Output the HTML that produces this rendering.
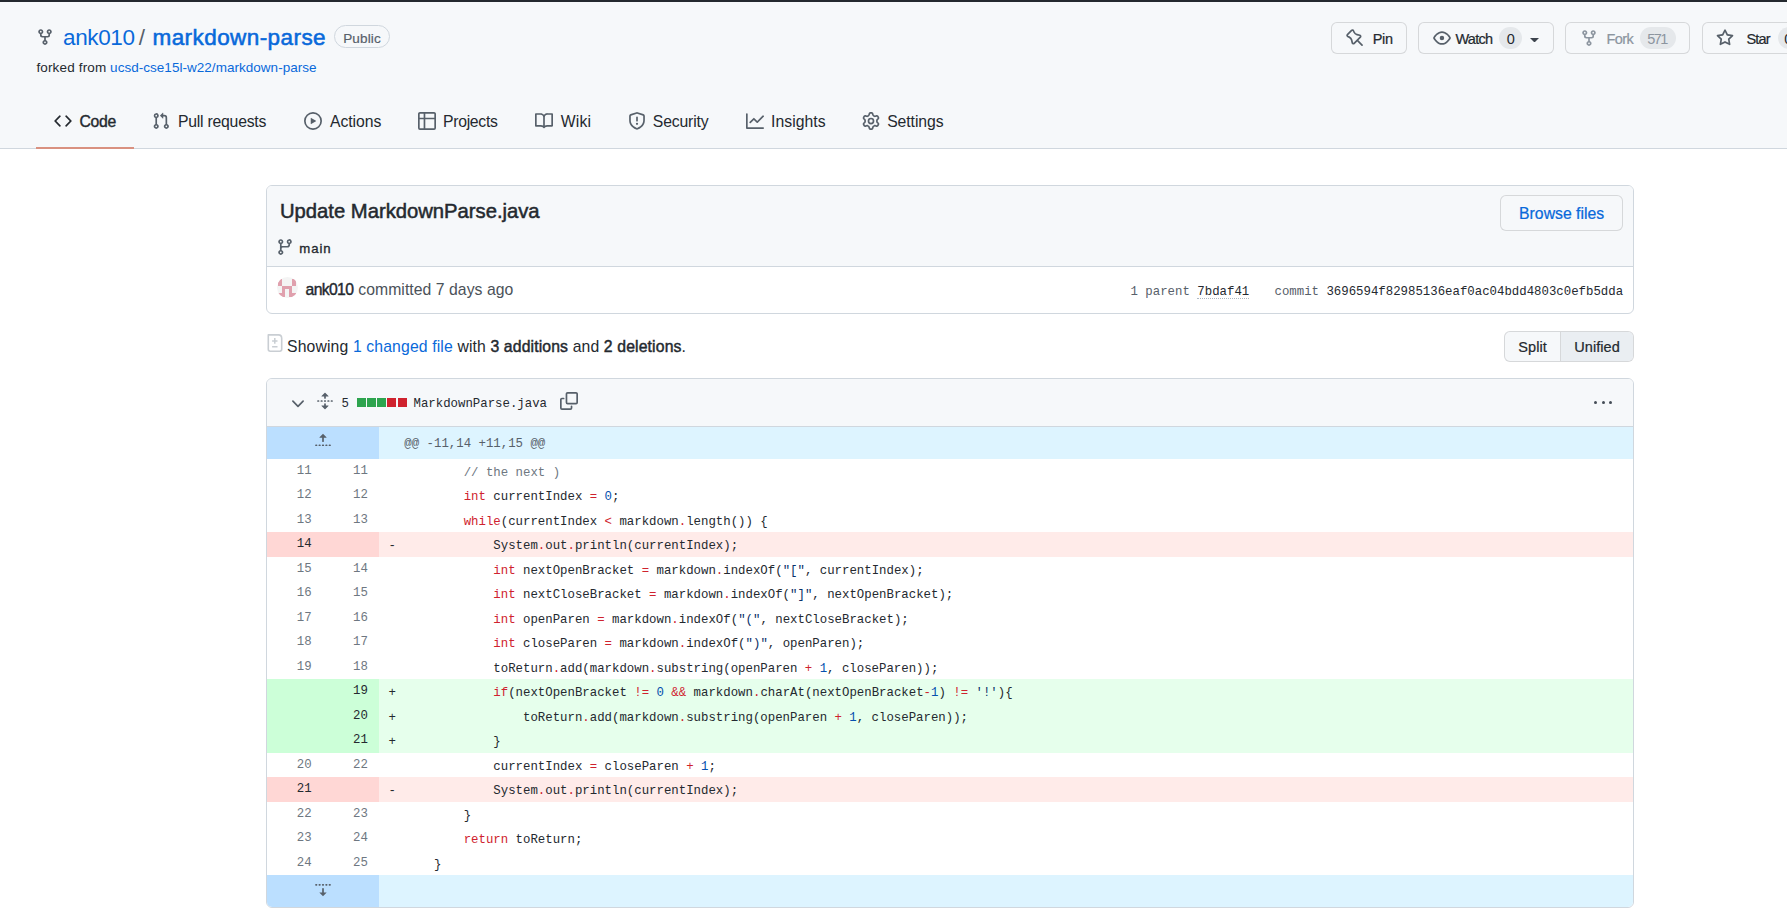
<!DOCTYPE html>
<html><head><meta charset="utf-8"><style>
html,body{margin:0;padding:0;background:#fff;width:1787px;height:920px;overflow:hidden;position:relative}
.t{position:absolute;white-space:pre;line-height:1}
b{font-weight:700}
</style></head><body>
<div style="position:absolute;left:0px;top:0px;width:1787px;height:2px;background:#24292f"></div>
<div style="position:absolute;left:0px;top:2px;width:1787px;height:146px;background:#f6f8fa"></div>
<div style="position:absolute;left:0px;top:148px;width:1787px;height:1px;background:#d0d7de"></div>
<svg style="position:absolute;left:36px;top:28px" width="18" height="18" viewBox="0 0 16 16" fill="#57606a"><path d="M5 5.372v.878c0 .414.336.75.75.75h4.5a.75.75 0 0 0 .75-.75v-.878a2.25 2.25 0 1 1 1.5 0v.878a2.25 2.25 0 0 1-2.25 2.25h-1.5v2.128a2.251 2.251 0 1 1-1.5 0V8.5h-1.5A2.25 2.25 0 0 1 3.5 6.25v-.878a2.25 2.25 0 1 1 1.5 0ZM5 3.25a.75.75 0 1 0-1.5 0 .75.75 0 0 0 1.5 0Zm6.75.75a.75.75 0 1 0 0-1.5.75.75 0 0 0 0 1.5Zm-3 8.75a.75.75 0 1 0-1.5 0 .75.75 0 0 0 1.5 0Z"/></svg>
<div class="t" style="left:63.00px;top:26.68px;font-size:22.5px;color:#0969da;font-weight:400;font-family:'Liberation Sans', sans-serif;letter-spacing:-0.360px;">ank010</div>
<div class="t" style="left:138.70px;top:26.68px;font-size:22.5px;color:#57606a;font-weight:400;font-family:'Liberation Sans', sans-serif;">/</div>
<div class="t" style="left:152.50px;top:26.68px;font-size:22.5px;color:#0969da;font-weight:400;-webkit-text-stroke:0.025em currentColor;font-family:'Liberation Sans', sans-serif;letter-spacing:0.423px;">markdown-parse</div>
<div style="position:absolute;left:334px;top:25px;width:56px;height:23px;border:1px solid #d0d7de;border-radius:12px;box-sizing:border-box"></div>
<div class="t" style="left:343.20px;top:32.22px;font-size:13.5px;color:#57606a;font-weight:400;-webkit-text-stroke:0.015em currentColor;font-family:'Liberation Sans', sans-serif;letter-spacing:0.140px;">Public</div>
<div class="t" style="left:36.40px;top:61.02px;font-size:13.5px;color:#24292f;font-weight:400;font-family:'Liberation Sans', sans-serif;letter-spacing:0.160px;">forked from</div>
<div class="t" style="left:110.10px;top:61.02px;font-size:13.5px;color:#0969da;font-weight:400;font-family:'Liberation Sans', sans-serif;letter-spacing:0.031px;">ucsd-cse15l-w22/markdown-parse</div>
<div style="position:absolute;left:1331px;top:22px;width:76px;height:32px;background:#f6f8fa;border:1px solid rgba(31,35,40,0.15);border-radius:6px;box-sizing:border-box"></div>
<svg style="position:absolute;left:1345.5px;top:28.5px" width="18" height="18" viewBox="0 0 16 16" fill="#57606a"><path d="M4.456.734a1.75 1.75 0 012.826.504l.613 1.327a3.081 3.081 0 002.084 1.707l2.454.584c1.332.317 1.8 1.972.832 2.94L11.06 10l3.72 3.72a.75.75 0 11-1.06 1.06L10 11.06l-2.204 2.205c-.968.968-2.623.5-2.94-.832l-.584-2.454a3.081 3.081 0 00-1.707-2.084l-1.327-.613a1.75 1.75 0 01-.504-2.826L4.456.734zM5.92 1.866a.25.25 0 00-.404-.072L1.794 5.516a.25.25 0 00.072.404l1.328.613A4.582 4.582 0 015.73 9.63l.584 2.454a.25.25 0 00.42.12l5.47-5.47a.25.25 0 00-.12-.42L9.63 5.73a4.581 4.581 0 01-3.098-2.537L5.92 1.866z"/></svg>
<div class="t" style="left:1372.70px;top:32.08px;font-size:14.5px;color:#24292f;font-weight:400;-webkit-text-stroke:0.015em currentColor;font-family:'Liberation Sans', sans-serif;letter-spacing:-0.350px;">Pin</div>
<div style="position:absolute;left:1418px;top:22px;width:136px;height:32px;background:#f6f8fa;border:1px solid rgba(31,35,40,0.15);border-radius:6px;box-sizing:border-box"></div>
<svg style="position:absolute;left:1433px;top:29px" width="18" height="18" viewBox="0 0 16 16" fill="#57606a"><path d="M8 2c1.981 0 3.671.992 4.933 2.078 1.27 1.091 2.187 2.345 2.637 3.023a1.62 1.62 0 0 1 0 1.798c-.45.678-1.367 1.932-2.637 3.023C11.67 13.008 9.981 14 8 14c-1.981 0-3.671-.992-4.933-2.078C1.797 10.83.88 9.576.43 8.898a1.62 1.62 0 0 1 0-1.798c.45-.677 1.367-1.931 2.637-3.022C4.33 2.992 6.019 2 8 2ZM1.679 7.932a.12.12 0 0 0 0 .136c.411.622 1.241 1.75 2.366 2.717C5.176 11.758 6.527 12.5 8 12.5c1.473 0 2.825-.742 3.955-1.715 1.124-.967 1.954-2.096 2.366-2.717a.12.12 0 0 0 0-.136c-.412-.621-1.242-1.75-2.366-2.717C10.824 4.242 9.473 3.5 8 3.5c-1.473 0-2.825.742-3.955 1.715-1.124.967-1.954 2.096-2.366 2.717ZM8 10a2 2 0 1 1-.001-3.999A2 2 0 0 1 8 10Z"/></svg>
<div class="t" style="left:1455.40px;top:32.08px;font-size:14.5px;color:#24292f;font-weight:400;-webkit-text-stroke:0.015em currentColor;font-family:'Liberation Sans', sans-serif;letter-spacing:-0.700px;">Watch</div>
<div style="position:absolute;left:1499px;top:27px;width:23px;height:22px;background:#e5e8eb;border-radius:11px"></div>
<div class="t" style="left:1506.70px;top:32.08px;font-size:14.5px;color:#24292f;font-weight:400;font-family:'Liberation Sans', sans-serif;">0</div>
<svg style="position:absolute;left:1530px;top:37.5px" width="9" height="4.5" viewBox="0 0 10 5" fill="#3d444d"><path d="M0 0h10L5 5z"/></svg>
<div style="position:absolute;left:1565px;top:22px;width:125px;height:32px;background:#f6f8fa;border:1px solid rgba(31,35,40,0.15);border-radius:6px;box-sizing:border-box"></div>
<svg style="position:absolute;left:1580px;top:29px" width="18" height="18" viewBox="0 0 16 16" fill="#8c959f"><path d="M5 5.372v.878c0 .414.336.75.75.75h4.5a.75.75 0 0 0 .75-.75v-.878a2.25 2.25 0 1 1 1.5 0v.878a2.25 2.25 0 0 1-2.25 2.25h-1.5v2.128a2.251 2.251 0 1 1-1.5 0V8.5h-1.5A2.25 2.25 0 0 1 3.5 6.25v-.878a2.25 2.25 0 1 1 1.5 0ZM5 3.25a.75.75 0 1 0-1.5 0 .75.75 0 0 0 1.5 0Zm6.75.75a.75.75 0 1 0 0-1.5.75.75 0 0 0 0 1.5Zm-3 8.75a.75.75 0 1 0-1.5 0 .75.75 0 0 0 1.5 0Z"/></svg>
<div class="t" style="left:1606.60px;top:32.08px;font-size:14.5px;color:#8c959f;font-weight:400;-webkit-text-stroke:0.015em currentColor;font-family:'Liberation Sans', sans-serif;letter-spacing:-0.633px;">Fork</div>
<div style="position:absolute;left:1640px;top:27px;width:36px;height:22px;background:#e5e8eb;border-radius:11px"></div>
<div class="t" style="left:1647.30px;top:32.08px;font-size:14.5px;color:#8c959f;font-weight:400;font-family:'Liberation Sans', sans-serif;letter-spacing:-1.650px;">571</div>
<div style="position:absolute;left:1702px;top:22px;width:120px;height:32px;background:#f6f8fa;border:1px solid rgba(31,35,40,0.15);border-radius:6px;box-sizing:border-box"></div>
<svg style="position:absolute;left:1716px;top:29px" width="18" height="18" viewBox="0 0 16 16" fill="#57606a"><path d="M8 .25a.75.75 0 0 1 .673.418l1.882 3.815 4.21.612a.75.75 0 0 1 .416 1.279l-3.046 2.97.719 4.192a.751.751 0 0 1-1.088.791L8 12.347l-3.766 1.98a.75.75 0 0 1-1.088-.79l.72-4.194L.818 6.374a.75.75 0 0 1 .416-1.28l4.21-.611L7.327.668A.75.75 0 0 1 8 .25Zm0 2.445L6.615 5.5a.75.75 0 0 1-.564.41l-3.097.45 2.24 2.184a.75.75 0 0 1 .216.664l-.528 3.084 2.769-1.456a.75.75 0 0 1 .698 0l2.77 1.456-.53-3.084a.75.75 0 0 1 .216-.664l2.24-2.183-3.096-.45a.75.75 0 0 1-.564-.41L8 2.694Z"/></svg>
<div class="t" style="left:1746.40px;top:32.08px;font-size:14.5px;color:#24292f;font-weight:400;-webkit-text-stroke:0.015em currentColor;font-family:'Liberation Sans', sans-serif;letter-spacing:-0.833px;">Star</div>
<div style="position:absolute;left:1777.5px;top:27px;width:36px;height:22px;background:#e5e8eb;border-radius:11px"></div>
<div class="t" style="left:1784.20px;top:32.08px;font-size:14.5px;color:#24292f;font-weight:400;font-family:'Liberation Sans', sans-serif;">0</div>
<svg style="position:absolute;left:54px;top:112px" width="18" height="18" viewBox="0 0 16 16" fill="#24292f"><path d="m11.28 3.22 4.25 4.25a.75.75 0 0 1 0 1.06l-4.25 4.25a.749.749 0 0 1-1.275-.326.749.749 0 0 1 .215-.734L13.94 8l-3.72-3.72a.749.749 0 0 1 .326-1.275.749.749 0 0 1 .734.215Zm-6.56 0a.751.751 0 0 1 1.042.018.751.751 0 0 1 .018 1.042L2.06 8l3.72 3.72a.749.749 0 0 1-.326 1.275.749.749 0 0 1-.734-.215L.47 8.53a.75.75 0 0 1 0-1.06Z"/></svg>
<div class="t" style="left:79.50px;top:114.01px;font-size:15.75px;color:#24292f;font-weight:400;-webkit-text-stroke:0.025em currentColor;font-family:'Liberation Sans', sans-serif;letter-spacing:-0.333px;">Code</div>
<svg style="position:absolute;left:152px;top:112px" width="18" height="18" viewBox="0 0 16 16" fill="#57606a"><path d="M1.5 3.25a2.25 2.25 0 1 1 3 2.122v5.256a2.251 2.251 0 1 1-1.5 0V5.372A2.25 2.25 0 0 1 1.5 3.25Zm5.677-.177L9.573.677A.25.25 0 0 1 10 .854V2.5h1A2.5 2.5 0 0 1 13.5 5v5.628a2.251 2.251 0 1 1-1.5 0V5a1 1 0 0 0-1-1h-1v1.646a.25.25 0 0 1-.427.177L7.177 3.427a.25.25 0 0 1 0-.354ZM3.75 2.5a.75.75 0 1 0 0 1.5.75.75 0 0 0 0-1.5Zm0 9.5a.75.75 0 1 0 0 1.5.75.75 0 0 0 0-1.5Zm8.25.75a.75.75 0 1 0 1.5 0 .75.75 0 0 0-1.5 0Z"/></svg>
<div class="t" style="left:178.00px;top:114.01px;font-size:15.75px;color:#24292f;font-weight:400;font-family:'Liberation Sans', sans-serif;letter-spacing:-0.225px;">Pull requests</div>
<svg style="position:absolute;left:304px;top:112px" width="18" height="18" viewBox="0 0 16 16" fill="#57606a"><path d="M8 0a8 8 0 1 1 0 16A8 8 0 0 1 8 0ZM1.5 8a6.5 6.5 0 1 0 13 0 6.5 6.5 0 0 0-13 0Zm4.879-2.773 4.264 2.559a.25.25 0 0 1 0 .428l-4.264 2.559A.25.25 0 0 1 6 10.559V5.442a.25.25 0 0 1 .379-.215Z"/></svg>
<div class="t" style="left:329.90px;top:114.01px;font-size:15.75px;color:#24292f;font-weight:400;font-family:'Liberation Sans', sans-serif;letter-spacing:-0.017px;">Actions</div>
<svg style="position:absolute;left:418px;top:112px" width="18" height="18" viewBox="0 0 16 16" fill="#57606a"><path d="M0 1.75C0 .784.784 0 1.75 0h12.5C15.216 0 16 .784 16 1.75v12.5A1.75 1.75 0 0 1 14.25 16H1.75A1.75 1.75 0 0 1 0 14.25ZM6.5 6.5v8h7.75a.25.25 0 0 0 .25-.25V6.5Zm8-1.5V1.75a.25.25 0 0 0-.25-.25H6.5V5Zm-13 1.5v7.75c0 .138.112.25.25.25H5v-8ZM5 5V1.5H1.75a.25.25 0 0 0-.25.25V5Z"/></svg>
<div class="t" style="left:442.90px;top:114.01px;font-size:15.75px;color:#24292f;font-weight:400;font-family:'Liberation Sans', sans-serif;letter-spacing:-0.257px;">Projects</div>
<svg style="position:absolute;left:535px;top:112px" width="18" height="18" viewBox="0 0 16 16" fill="#57606a"><path d="M0 1.75A.75.75 0 0 1 .75 1h4.253c1.227 0 2.317.59 3 1.501A3.743 3.743 0 0 1 11.006 1h4.245a.75.75 0 0 1 .75.75v10.5a.75.75 0 0 1-.75.75h-4.507a2.25 2.25 0 0 0-1.591.659l-.622.621a.75.75 0 0 1-1.06 0l-.622-.621A2.25 2.25 0 0 0 5.258 13H.75a.75.75 0 0 1-.75-.75Zm7.251 10.324.004-5.073-.002-2.253A2.25 2.25 0 0 0 5.003 2.5H1.5v9h3.757a3.75 3.75 0 0 1 1.994.574ZM8.755 4.75l-.004 7.322a3.752 3.752 0 0 1 1.992-.572H14.5v-9h-3.495a2.25 2.25 0 0 0-2.25 2.25Z"/></svg>
<div class="t" style="left:560.80px;top:114.01px;font-size:15.75px;color:#24292f;font-weight:400;font-family:'Liberation Sans', sans-serif;letter-spacing:0.133px;">Wiki</div>
<svg style="position:absolute;left:628px;top:112px" width="18" height="18" viewBox="0 0 16 16" fill="#57606a"><path d="M7.467.133a1.748 1.748 0 0 1 1.066 0l5.25 1.68A1.75 1.75 0 0 1 15 3.48V7c0 1.566-.32 3.182-1.303 4.682-.983 1.498-2.585 2.813-5.032 3.855a1.697 1.697 0 0 1-1.33 0c-2.447-1.042-4.049-2.357-5.032-3.855C1.32 10.182 1 8.566 1 7V3.48a1.755 1.755 0 0 1 1.217-1.667Zm.61 1.429a.25.25 0 0 0-.153 0l-5.25 1.68a.25.25 0 0 0-.174.238V7c0 1.358.275 2.666 1.057 3.86.784 1.194 2.121 2.34 4.366 3.297a.196.196 0 0 0 .154 0c2.245-.956 3.582-2.104 4.366-3.298C13.225 9.666 13.5 8.36 13.5 7V3.48a.251.251 0 0 0-.174-.237l-5.25-1.68ZM8.75 4.75v3a.75.75 0 0 1-1.5 0v-3a.75.75 0 0 1 1.5 0ZM9 10.5a1 1 0 1 1-2 0 1 1 0 0 1 2 0Z"/></svg>
<div class="t" style="left:652.80px;top:114.01px;font-size:15.75px;color:#24292f;font-weight:400;font-family:'Liberation Sans', sans-serif;letter-spacing:-0.157px;">Security</div>
<svg style="position:absolute;left:746px;top:112px" width="18" height="18" viewBox="0 0 16 16" fill="#57606a"><path d="M1.5 1.75V13.5h13.75a.75.75 0 0 1 0 1.5H.75a.75.75 0 0 1-.75-.75V1.75a.75.75 0 0 1 1.5 0Zm14.28 2.53-5.25 5.25a.75.75 0 0 1-1.06 0L7 7.06 4.28 9.78a.751.751 0 0 1-1.042-.018.751.751 0 0 1-.018-1.042l3.25-3.25a.75.75 0 0 1 1.06 0L10 7.94l4.72-4.72a.751.751 0 0 1 1.042.018.751.751 0 0 1 .018 1.042Z"/></svg>
<div class="t" style="left:771.00px;top:114.01px;font-size:15.75px;color:#24292f;font-weight:400;font-family:'Liberation Sans', sans-serif;letter-spacing:0.043px;">Insights</div>
<svg style="position:absolute;left:862px;top:112px" width="18" height="18" viewBox="0 0 16 16" fill="#57606a"><path d="M8 0a8.2 8.2 0 0 1 .701.031C9.444.095 9.99.645 10.16 1.29l.288 1.107c.018.066.079.158.212.224.231.114.454.243.668.386.123.082.233.09.299.071l1.103-.303c.644-.176 1.392.021 1.82.63.27.385.506.792.704 1.218.315.675.111 1.422-.364 1.891l-.814.806c-.049.048-.098.147-.088.294.016.257.016.515 0 .772-.01.147.038.246.088.294l.814.806c.475.469.679 1.216.364 1.891a7.977 7.977 0 0 1-.704 1.217c-.428.61-1.176.807-1.82.63l-1.102-.302c-.067-.019-.177-.011-.3.071a5.909 5.909 0 0 1-.668.386c-.133.066-.194.158-.211.224l-.29 1.106c-.168.646-.715 1.196-1.458 1.26a8.006 8.006 0 0 1-1.402 0c-.743-.064-1.289-.614-1.458-1.26l-.289-1.106c-.018-.066-.079-.158-.212-.224a5.738 5.738 0 0 1-.668-.386c-.123-.082-.233-.09-.299-.071l-1.103.303c-.644.176-1.392-.021-1.82-.63a8.12 8.12 0 0 1-.704-1.218c-.315-.675-.111-1.422.363-1.891l.815-.806c.05-.048.098-.147.088-.294a6.214 6.214 0 0 1 0-.772c.01-.147-.038-.246-.088-.294l-.815-.806C.635 6.045.431 5.298.746 4.623a7.92 7.92 0 0 1 .704-1.217c.428-.61 1.176-.807 1.82-.63l1.102.302c.067.019.177.011.3-.071.214-.143.437-.272.668-.386.133-.066.194-.158.211-.224l.29-1.106C6.009.645 6.556.095 7.299.03 7.53.01 7.764 0 8 0Zm-.571 1.525c-.036.003-.108.036-.137.146l-.289 1.105c-.147.561-.549.967-.998 1.189-.173.086-.34.183-.5.29-.417.278-.97.423-1.529.27l-1.103-.303c-.109-.03-.175.016-.195.045-.22.312-.412.644-.573.99-.014.031-.021.11.059.19l.815.806c.411.406.562.957.53 1.456a4.709 4.709 0 0 0 0 .582c.032.499-.119 1.05-.53 1.456l-.815.806c-.081.08-.073.159-.059.19.162.346.353.677.573.989.02.03.085.076.195.046l1.102-.303c.56-.153 1.113-.008 1.53.27.161.107.328.204.501.29.447.222.85.629.997 1.189l.289 1.105c.029.109.101.143.137.146a6.6 6.6 0 0 0 1.142 0c.036-.003.108-.036.137-.146l.289-1.105c.147-.561.549-.967.998-1.189.173-.086.34-.183.5-.29.417-.278.97-.423 1.529-.27l1.103.303c.109.029.175-.016.195-.045.22-.313.411-.644.573-.99.014-.031.021-.11-.059-.19l-.815-.806c-.411-.406-.562-.957-.53-1.456a4.709 4.709 0 0 0 0-.582c-.032-.499.119-1.05.53-1.456l.815-.806c.081-.08.073-.159.059-.19a6.464 6.464 0 0 0-.573-.989c-.02-.03-.085-.076-.195-.046l-1.102.303c-.56.153-1.113.008-1.53-.27a4.44 4.44 0 0 0-.501-.29c-.447-.222-.85-.629-.997-1.189l-.289-1.105c-.029-.11-.101-.143-.137-.146a6.6 6.6 0 0 0-1.142 0ZM11 8a3 3 0 1 1-6 0 3 3 0 0 1 6 0ZM9.5 8a1.5 1.5 0 1 0-3.001.001A1.5 1.5 0 0 0 9.5 8Z"/></svg>
<div class="t" style="left:887.20px;top:114.01px;font-size:15.75px;color:#24292f;font-weight:400;font-family:'Liberation Sans', sans-serif;letter-spacing:-0.071px;">Settings</div>
<div style="position:absolute;left:36px;top:147px;width:98px;height:2px;background:#d99180;border-radius:0"></div>
<div style="position:absolute;left:266px;top:185px;width:1368px;height:129px;border:1px solid #d0d7de;border-radius:6px;box-sizing:border-box;background:#fff;overflow:hidden"></div>
<div style="position:absolute;left:267px;top:186px;width:1366px;height:80px;background:#f6f8fa;border-radius:5px 5px 0 0"></div>
<div style="position:absolute;left:267px;top:266px;width:1366px;height:1px;background:#d0d7de"></div>
<div class="t" style="left:280.00px;top:201.39px;font-size:20.25px;color:#24292f;font-weight:400;-webkit-text-stroke:0.025em currentColor;font-family:'Liberation Sans', sans-serif;letter-spacing:-0.017px;">Update MarkdownParse.java</div>
<div style="position:absolute;left:1500px;top:195px;width:123px;height:36px;background:#f6f8fa;border:1px solid rgba(31,35,40,0.15);border-radius:6px;box-sizing:border-box"></div>
<div class="t" style="left:1519.10px;top:206.21px;font-size:15.75px;color:#0969da;font-weight:400;-webkit-text-stroke:0.015em currentColor;font-family:'Liberation Sans', sans-serif;letter-spacing:0.009px;">Browse files</div>
<svg style="position:absolute;left:276px;top:238px" width="18" height="18" viewBox="0 0 16 16" fill="#57606a"><path d="M9.5 3.25a2.25 2.25 0 1 1 3 2.122V6A2.5 2.5 0 0 1 10 8.5H6a1 1 0 0 0-1 1v1.128a2.251 2.251 0 1 1-1.5 0V5.372a2.25 2.25 0 1 1 1.5 0v1.836A2.493 2.493 0 0 1 6 7h4a1 1 0 0 0 1-1v-.628A2.25 2.25 0 0 1 9.5 3.25Zm-6 0a.75.75 0 1 0 1.5 0 .75.75 0 0 0-1.5 0Zm8.25-.75a.75.75 0 1 0 0 1.5.75.75 0 0 0 0-1.5ZM4.25 12a.75.75 0 1 0 0 1.5.75.75 0 0 0 0-1.5Z"/></svg>
<div class="t" style="left:299.30px;top:241.98px;font-size:13.2px;color:#24292f;font-weight:400;-webkit-text-stroke:0.025em currentColor;font-family:'Liberation Sans', sans-serif;letter-spacing:0.900px;">main</div>
<div style="position:absolute;left:276.5px;top:277px;width:21px;height:21px;border-radius:50%;background:#f4f4f4;overflow:hidden"><div style="position:absolute;left:1.50px;top:1.50px;width:3.7px;height:3.7px;background:#e0a0ad"></div><div style="position:absolute;left:15.90px;top:1.50px;width:3.7px;height:3.7px;background:#e0a0ad"></div><div style="position:absolute;left:1.50px;top:5.10px;width:3.7px;height:3.7px;background:#e0a0ad"></div><div style="position:absolute;left:15.90px;top:5.10px;width:3.7px;height:3.7px;background:#e0a0ad"></div><div style="position:absolute;left:5.10px;top:8.70px;width:3.7px;height:3.7px;background:#e0a0ad"></div><div style="position:absolute;left:8.70px;top:8.70px;width:3.7px;height:3.7px;background:#e0a0ad"></div><div style="position:absolute;left:12.30px;top:8.70px;width:3.7px;height:3.7px;background:#e0a0ad"></div><div style="position:absolute;left:5.10px;top:12.30px;width:3.7px;height:3.7px;background:#e0a0ad"></div><div style="position:absolute;left:12.30px;top:12.30px;width:3.7px;height:3.7px;background:#e0a0ad"></div><div style="position:absolute;left:1.50px;top:15.90px;width:3.7px;height:3.7px;background:#e0a0ad"></div><div style="position:absolute;left:5.10px;top:15.90px;width:3.7px;height:3.7px;background:#e0a0ad"></div><div style="position:absolute;left:12.30px;top:15.90px;width:3.7px;height:3.7px;background:#e0a0ad"></div><div style="position:absolute;left:15.90px;top:15.90px;width:3.7px;height:3.7px;background:#e0a0ad"></div></div>
<div class="t" style="left:305.60px;top:282.11px;font-size:15.75px;color:#24292f;font-weight:400;-webkit-text-stroke:0.025em currentColor;font-family:'Liberation Sans', sans-serif;letter-spacing:-0.660px;">ank010</div>
<div class="t" style="left:358.30px;top:282.11px;font-size:15.75px;color:#4b5259;font-weight:400;font-family:'Liberation Sans', sans-serif;letter-spacing:0.047px;">committed 7 days ago</div>
<div class="t" style="left:1130.50px;top:286.00px;font-size:12.37px;color:#57606a;font-weight:400;font-family:'Liberation Mono', monospace;">1 parent </div>
<div class="t" style="left:1197.30px;top:286.00px;font-size:12.37px;color:#24292f;font-weight:400;font-family:'Liberation Mono', monospace;">7bdaf41</div>
<div style="position:absolute;left:1197px;top:297.5px;width:52px;height:1px;border-bottom:1px dotted #afb8c1;height:0"></div>
<div class="t" style="left:1274.50px;top:286.00px;font-size:12.37px;color:#57606a;font-weight:400;font-family:'Liberation Mono', monospace;">commit </div>
<div class="t" style="left:1326.40px;top:286.00px;font-size:12.37px;color:#24292f;font-weight:400;font-family:'Liberation Mono', monospace;">3696594f82985136eaf0ac04bdd4803c0efb5dda</div>
<svg style="position:absolute;left:262px;top:330px" width="26" height="26" viewBox="262 330 26 26"><path d="M268.3 334.9 H278.5 Q281.7 334.9 281.7 338.4 V349.3 Q281.7 351.2 279.8 351.2 H270.2 Q268.3 351.2 268.3 349.3 Z" fill="none" stroke="#c9ced3" stroke-width="1.6" stroke-linejoin="round"/><path d="M274.8 338.1 V343.7 M272.1 340.9 H277.5 M272.1 346.8 H277.5" stroke="#c9ced3" stroke-width="1.5"/></svg>
<div class="t" style="left:287.00px;top:339.11px;font-size:15.75px;color:#24292f;font-weight:400;font-family:'Liberation Sans', sans-serif;letter-spacing:0.136px;">Showing <span style="color:#0969da">1 changed file</span> with <span style="-webkit-text-stroke:0.45px currentColor">3 additions</span> and <span style="-webkit-text-stroke:0.45px currentColor">2 deletions</span>.</div>
<div style="position:absolute;left:1504px;top:331px;width:130px;height:31px;border:1px solid rgba(31,35,40,0.15);border-radius:6px;box-sizing:border-box;background:#f6f8fa;overflow:hidden"></div>
<div style="position:absolute;left:1561px;top:332px;width:72px;height:29px;background:#eaeef2;border-radius:0 5px 5px 0"></div>
<div style="position:absolute;left:1560px;top:332px;width:1px;height:29px;background:rgba(31,35,40,0.15)"></div>
<div class="t" style="left:1518.30px;top:340.28px;font-size:14.5px;color:#24292f;font-weight:400;-webkit-text-stroke:0.015em currentColor;font-family:'Liberation Sans', sans-serif;letter-spacing:0.050px;">Split</div>
<div class="t" style="left:1574.20px;top:340.28px;font-size:14.5px;color:#24292f;font-weight:400;-webkit-text-stroke:0.015em currentColor;font-family:'Liberation Sans', sans-serif;letter-spacing:0.083px;">Unified</div>
<div style="position:absolute;left:266px;top:378px;width:1368px;height:530px;border:1px solid #d0d7de;border-radius:6px;box-sizing:border-box;background:#fff"></div>
<div style="position:absolute;left:267px;top:379px;width:1366px;height:47px;background:#f6f8fa;border-radius:5px 5px 0 0"></div>
<div style="position:absolute;left:267px;top:426px;width:1366px;height:1px;background:#d0d7de"></div>
<svg style="position:absolute;left:290px;top:398px" width="16" height="12" viewBox="0 0 16 12"><polyline points="2.9,3.2 8,8.3 13.1,3.2" fill="none" stroke="#57606a" stroke-width="1.7" stroke-linecap="round" stroke-linejoin="round"/></svg>
<svg style="position:absolute;left:316px;top:392px" width="18" height="18" viewBox="0 0 16 16" fill="#57606a"><path d="m8.177.677 2.896 2.896a.25.25 0 0 1-.177.427H8.75v1.25a.75.75 0 0 1-1.5 0V4H5.104a.25.25 0 0 1-.177-.427L7.823.677a.25.25 0 0 1 .354 0ZM7.25 10.75a.75.75 0 0 1 1.5 0V12h2.146a.25.25 0 0 1 .177.427l-2.896 2.896a.25.25 0 0 1-.354 0l-2.896-2.896A.25.25 0 0 1 5.104 12H7.25v-1.25Zm-5-2a.75.75 0 0 0 0-1.5h-.5a.75.75 0 0 0 0 1.5h.5ZM6 8a.75.75 0 0 1-.75.75h-.5a.75.75 0 0 1 0-1.5h.5A.75.75 0 0 1 6 8Zm2.25.75a.75.75 0 0 0 0-1.5h-.5a.75.75 0 0 0 0 1.5h.5ZM12 8a.75.75 0 0 1-.75.75h-.5a.75.75 0 0 1 0-1.5h.5A.75.75 0 0 1 12 8Zm2.25.75a.75.75 0 0 0 0-1.5h-.5a.75.75 0 0 0 0 1.5h.5Z"/></svg>
<div class="t" style="left:341.50px;top:397.90px;font-size:12.37px;color:#24292f;font-weight:400;font-family:'Liberation Mono', monospace;">5</div>
<div style="position:absolute;left:357px;top:398px;width:9px;height:9px;background:#2da44e"></div>
<div style="position:absolute;left:367px;top:398px;width:9px;height:9px;background:#2da44e"></div>
<div style="position:absolute;left:377px;top:398px;width:9px;height:9px;background:#2da44e"></div>
<div style="position:absolute;left:387px;top:398px;width:9px;height:9px;background:#cf222e"></div>
<div style="position:absolute;left:398px;top:398px;width:9px;height:9px;background:#cf222e"></div>
<div class="t" style="left:413.50px;top:397.90px;font-size:12.37px;color:#24292f;font-weight:400;font-family:'Liberation Mono', monospace;">MarkdownParse.java</div>
<svg style="position:absolute;left:560px;top:392px" width="18" height="18" viewBox="0 0 16 16" fill="#57606a"><path d="M0 6.75C0 5.784.784 5 1.75 5h1.5a.75.75 0 0 1 0 1.5h-1.5a.25.25 0 0 0-.25.25v7.5c0 .138.112.25.25.25h7.5a.25.25 0 0 0 .25-.25v-1.5a.75.75 0 0 1 1.5 0v1.5A1.75 1.75 0 0 1 9.25 16h-7.5A1.75 1.75 0 0 1 0 14.25Z"/><path d="M5 1.75C5 .784 5.784 0 6.75 0h7.5C15.216 0 16 .784 16 1.75v7.5A1.75 1.75 0 0 1 14.25 11h-7.5A1.75 1.75 0 0 1 5 9.25Zm1.75-.25a.25.25 0 0 0-.25.25v7.5c0 .138.112.25.25.25h7.5a.25.25 0 0 0 .25-.25v-7.5a.25.25 0 0 0-.25-.25Z"/></svg>
<div style="position:absolute;left:1594.2px;top:400.8px;width:3.2px;height:3.2px;background:#444c56;border-radius:50%"></div>
<div style="position:absolute;left:1601.5px;top:400.8px;width:3.2px;height:3.2px;background:#444c56;border-radius:50%"></div>
<div style="position:absolute;left:1608.8px;top:400.8px;width:3.2px;height:3.2px;background:#444c56;border-radius:50%"></div>
<div style="position:absolute;left:267px;top:427px;width:112px;height:32px;background:#bbdfff"></div>
<div style="position:absolute;left:379px;top:427px;width:1254px;height:32px;background:#ddf4ff"></div>
<div class="t" style="left:404.30px;top:437.90px;font-size:12.37px;color:#57606a;font-weight:400;font-family:'Liberation Mono', monospace;">@@ -11,14 +11,15 @@</div>
<svg style="position:absolute;left:314px;top:432px" width="18" height="18" viewBox="0 0 16 16" fill="#57606a"><path d="M7.823 1.677 4.927 4.573A.25.25 0 0 0 5.104 5H7.25v3.236a.75.75 0 1 0 1.5 0V5h2.146a.25.25 0 0 0 .177-.427L8.177 1.677a.25.25 0 0 0-.354 0ZM13.75 11a.75.75 0 0 0 0 1.5h.5a.75.75 0 0 0 0-1.5h-.5Zm-3.75.75a.75.75 0 0 1 .75-.75h.5a.75.75 0 0 1 0 1.5h-.5a.75.75 0 0 1-.75-.75ZM7.75 11a.75.75 0 0 0 0 1.5h.5a.75.75 0 0 0 0-1.5h-.5ZM4 11.75a.75.75 0 0 1 .75-.75h.5a.75.75 0 0 1 0 1.5h-.5a.75.75 0 0 1-.75-.75ZM1.75 11a.75.75 0 0 0 0 1.5h.5a.75.75 0 0 0 0-1.5h-.5Z"/></svg>
<div class="t" style="left:296.86px;top:464.90px;font-size:12.37px;color:#6e7781;font-weight:400;font-family:'Liberation Mono', monospace;">11</div>
<div class="t" style="left:353.06px;top:464.90px;font-size:12.37px;color:#6e7781;font-weight:400;font-family:'Liberation Mono', monospace;">11</div>
<div class="t" style="left:404.30px;top:466.70px;font-size:12.37px;color:#24292f;font-weight:400;font-family:'Liberation Mono', monospace;">        <span style="color:#6e7781">// the next )</span></div>
<div class="t" style="left:296.86px;top:489.40px;font-size:12.37px;color:#6e7781;font-weight:400;font-family:'Liberation Mono', monospace;">12</div>
<div class="t" style="left:353.06px;top:489.40px;font-size:12.37px;color:#6e7781;font-weight:400;font-family:'Liberation Mono', monospace;">12</div>
<div class="t" style="left:404.30px;top:491.20px;font-size:12.37px;color:#24292f;font-weight:400;font-family:'Liberation Mono', monospace;">        <span style="color:#cf222e">int</span> currentIndex <span style="color:#cf222e">=</span> <span style="color:#0550ae">0</span>;</div>
<div class="t" style="left:296.86px;top:513.90px;font-size:12.37px;color:#6e7781;font-weight:400;font-family:'Liberation Mono', monospace;">13</div>
<div class="t" style="left:353.06px;top:513.90px;font-size:12.37px;color:#6e7781;font-weight:400;font-family:'Liberation Mono', monospace;">13</div>
<div class="t" style="left:404.30px;top:515.70px;font-size:12.37px;color:#24292f;font-weight:400;font-family:'Liberation Mono', monospace;">        <span style="color:#cf222e">while</span>(currentIndex <span style="color:#cf222e">&lt;</span> markdown<span style="color:#cf222e">.</span>length()) {</div>
<div style="position:absolute;left:267px;top:532.0px;width:112px;height:24.5px;background:#ffd7d5"></div>
<div style="position:absolute;left:379px;top:532.0px;width:1254px;height:24.5px;background:#ffebe9"></div>
<div class="t" style="left:296.86px;top:538.40px;font-size:12.37px;color:#24292f;font-weight:400;font-family:'Liberation Mono', monospace;">14</div>
<div class="t" style="left:388.60px;top:540.20px;font-size:12.37px;color:#24292f;font-weight:400;font-family:'Liberation Mono', monospace;">-</div>
<div class="t" style="left:404.30px;top:540.20px;font-size:12.37px;color:#24292f;font-weight:400;font-family:'Liberation Mono', monospace;">            System<span style="color:#cf222e">.</span>out<span style="color:#cf222e">.</span>println(currentIndex);</div>
<div class="t" style="left:296.86px;top:562.90px;font-size:12.37px;color:#6e7781;font-weight:400;font-family:'Liberation Mono', monospace;">15</div>
<div class="t" style="left:353.06px;top:562.90px;font-size:12.37px;color:#6e7781;font-weight:400;font-family:'Liberation Mono', monospace;">14</div>
<div class="t" style="left:404.30px;top:564.70px;font-size:12.37px;color:#24292f;font-weight:400;font-family:'Liberation Mono', monospace;">            <span style="color:#cf222e">int</span> nextOpenBracket <span style="color:#cf222e">=</span> markdown<span style="color:#cf222e">.</span>indexOf(<span style="color:#0a3069">"["</span>, currentIndex);</div>
<div class="t" style="left:296.86px;top:587.40px;font-size:12.37px;color:#6e7781;font-weight:400;font-family:'Liberation Mono', monospace;">16</div>
<div class="t" style="left:353.06px;top:587.40px;font-size:12.37px;color:#6e7781;font-weight:400;font-family:'Liberation Mono', monospace;">15</div>
<div class="t" style="left:404.30px;top:589.20px;font-size:12.37px;color:#24292f;font-weight:400;font-family:'Liberation Mono', monospace;">            <span style="color:#cf222e">int</span> nextCloseBracket <span style="color:#cf222e">=</span> markdown<span style="color:#cf222e">.</span>indexOf(<span style="color:#0a3069">"]"</span>, nextOpenBracket);</div>
<div class="t" style="left:296.86px;top:611.90px;font-size:12.37px;color:#6e7781;font-weight:400;font-family:'Liberation Mono', monospace;">17</div>
<div class="t" style="left:353.06px;top:611.90px;font-size:12.37px;color:#6e7781;font-weight:400;font-family:'Liberation Mono', monospace;">16</div>
<div class="t" style="left:404.30px;top:613.70px;font-size:12.37px;color:#24292f;font-weight:400;font-family:'Liberation Mono', monospace;">            <span style="color:#cf222e">int</span> openParen <span style="color:#cf222e">=</span> markdown<span style="color:#cf222e">.</span>indexOf(<span style="color:#0a3069">"("</span>, nextCloseBracket);</div>
<div class="t" style="left:296.86px;top:636.40px;font-size:12.37px;color:#6e7781;font-weight:400;font-family:'Liberation Mono', monospace;">18</div>
<div class="t" style="left:353.06px;top:636.40px;font-size:12.37px;color:#6e7781;font-weight:400;font-family:'Liberation Mono', monospace;">17</div>
<div class="t" style="left:404.30px;top:638.20px;font-size:12.37px;color:#24292f;font-weight:400;font-family:'Liberation Mono', monospace;">            <span style="color:#cf222e">int</span> closeParen <span style="color:#cf222e">=</span> markdown<span style="color:#cf222e">.</span>indexOf(<span style="color:#0a3069">")"</span>, openParen);</div>
<div class="t" style="left:296.86px;top:660.90px;font-size:12.37px;color:#6e7781;font-weight:400;font-family:'Liberation Mono', monospace;">19</div>
<div class="t" style="left:353.06px;top:660.90px;font-size:12.37px;color:#6e7781;font-weight:400;font-family:'Liberation Mono', monospace;">18</div>
<div class="t" style="left:404.30px;top:662.70px;font-size:12.37px;color:#24292f;font-weight:400;font-family:'Liberation Mono', monospace;">            toReturn<span style="color:#cf222e">.</span>add(markdown<span style="color:#cf222e">.</span>substring(openParen <span style="color:#cf222e">+</span> <span style="color:#0550ae">1</span>, closeParen));</div>
<div style="position:absolute;left:267px;top:679.0px;width:112px;height:24.5px;background:#ccffd8"></div>
<div style="position:absolute;left:379px;top:679.0px;width:1254px;height:24.5px;background:#e6ffec"></div>
<div class="t" style="left:353.06px;top:685.40px;font-size:12.37px;color:#24292f;font-weight:400;font-family:'Liberation Mono', monospace;">19</div>
<div class="t" style="left:388.60px;top:687.20px;font-size:12.37px;color:#24292f;font-weight:400;font-family:'Liberation Mono', monospace;">+</div>
<div class="t" style="left:404.30px;top:687.20px;font-size:12.37px;color:#24292f;font-weight:400;font-family:'Liberation Mono', monospace;">            <span style="color:#cf222e">if</span>(nextOpenBracket <span style="color:#cf222e">!=</span> <span style="color:#0550ae">0</span> <span style="color:#cf222e">&amp;&amp;</span> markdown<span style="color:#cf222e">.</span>charAt(nextOpenBracket<span style="color:#cf222e">-</span><span style="color:#0550ae">1</span>) <span style="color:#cf222e">!=</span> <span style="color:#0a3069">'!'</span>){</div>
<div style="position:absolute;left:267px;top:703.5px;width:112px;height:24.5px;background:#ccffd8"></div>
<div style="position:absolute;left:379px;top:703.5px;width:1254px;height:24.5px;background:#e6ffec"></div>
<div class="t" style="left:353.06px;top:709.90px;font-size:12.37px;color:#24292f;font-weight:400;font-family:'Liberation Mono', monospace;">20</div>
<div class="t" style="left:388.60px;top:711.70px;font-size:12.37px;color:#24292f;font-weight:400;font-family:'Liberation Mono', monospace;">+</div>
<div class="t" style="left:404.30px;top:711.70px;font-size:12.37px;color:#24292f;font-weight:400;font-family:'Liberation Mono', monospace;">                toReturn<span style="color:#cf222e">.</span>add(markdown<span style="color:#cf222e">.</span>substring(openParen <span style="color:#cf222e">+</span> <span style="color:#0550ae">1</span>, closeParen));</div>
<div style="position:absolute;left:267px;top:728.0px;width:112px;height:24.5px;background:#ccffd8"></div>
<div style="position:absolute;left:379px;top:728.0px;width:1254px;height:24.5px;background:#e6ffec"></div>
<div class="t" style="left:353.06px;top:734.40px;font-size:12.37px;color:#24292f;font-weight:400;font-family:'Liberation Mono', monospace;">21</div>
<div class="t" style="left:388.60px;top:736.20px;font-size:12.37px;color:#24292f;font-weight:400;font-family:'Liberation Mono', monospace;">+</div>
<div class="t" style="left:404.30px;top:736.20px;font-size:12.37px;color:#24292f;font-weight:400;font-family:'Liberation Mono', monospace;">            }</div>
<div class="t" style="left:296.86px;top:758.90px;font-size:12.37px;color:#6e7781;font-weight:400;font-family:'Liberation Mono', monospace;">20</div>
<div class="t" style="left:353.06px;top:758.90px;font-size:12.37px;color:#6e7781;font-weight:400;font-family:'Liberation Mono', monospace;">22</div>
<div class="t" style="left:404.30px;top:760.70px;font-size:12.37px;color:#24292f;font-weight:400;font-family:'Liberation Mono', monospace;">            currentIndex <span style="color:#cf222e">=</span> closeParen <span style="color:#cf222e">+</span> <span style="color:#0550ae">1</span>;</div>
<div style="position:absolute;left:267px;top:777.0px;width:112px;height:24.5px;background:#ffd7d5"></div>
<div style="position:absolute;left:379px;top:777.0px;width:1254px;height:24.5px;background:#ffebe9"></div>
<div class="t" style="left:296.86px;top:783.40px;font-size:12.37px;color:#24292f;font-weight:400;font-family:'Liberation Mono', monospace;">21</div>
<div class="t" style="left:388.60px;top:785.20px;font-size:12.37px;color:#24292f;font-weight:400;font-family:'Liberation Mono', monospace;">-</div>
<div class="t" style="left:404.30px;top:785.20px;font-size:12.37px;color:#24292f;font-weight:400;font-family:'Liberation Mono', monospace;">            System<span style="color:#cf222e">.</span>out<span style="color:#cf222e">.</span>println(currentIndex);</div>
<div class="t" style="left:296.86px;top:807.90px;font-size:12.37px;color:#6e7781;font-weight:400;font-family:'Liberation Mono', monospace;">22</div>
<div class="t" style="left:353.06px;top:807.90px;font-size:12.37px;color:#6e7781;font-weight:400;font-family:'Liberation Mono', monospace;">23</div>
<div class="t" style="left:404.30px;top:809.70px;font-size:12.37px;color:#24292f;font-weight:400;font-family:'Liberation Mono', monospace;">        }</div>
<div class="t" style="left:296.86px;top:832.40px;font-size:12.37px;color:#6e7781;font-weight:400;font-family:'Liberation Mono', monospace;">23</div>
<div class="t" style="left:353.06px;top:832.40px;font-size:12.37px;color:#6e7781;font-weight:400;font-family:'Liberation Mono', monospace;">24</div>
<div class="t" style="left:404.30px;top:834.20px;font-size:12.37px;color:#24292f;font-weight:400;font-family:'Liberation Mono', monospace;">        <span style="color:#cf222e">return</span> toReturn;</div>
<div class="t" style="left:296.86px;top:856.90px;font-size:12.37px;color:#6e7781;font-weight:400;font-family:'Liberation Mono', monospace;">24</div>
<div class="t" style="left:353.06px;top:856.90px;font-size:12.37px;color:#6e7781;font-weight:400;font-family:'Liberation Mono', monospace;">25</div>
<div class="t" style="left:404.30px;top:858.70px;font-size:12.37px;color:#24292f;font-weight:400;font-family:'Liberation Mono', monospace;">    }</div>
<div style="position:absolute;left:267px;top:875px;width:112px;height:32px;background:#bbdfff;border-radius:0 0 0 5px"></div>
<div style="position:absolute;left:379px;top:875px;width:1254px;height:32px;background:#ddf4ff;border-radius:0 0 5px 0"></div>
<svg style="position:absolute;left:314px;top:880px" width="18" height="18" viewBox="0 0 16 16" fill="#57606a"><path d="M8.177 14.323l2.896-2.896a.25.25 0 0 0-.177-.427H8.75V7.764a.75.75 0 1 0-1.5 0V11H5.104a.25.25 0 0 0-.177.427l2.896 2.896a.25.25 0 0 0 .354 0ZM2.25 5a.75.75 0 0 0 0-1.5h-.5a.75.75 0 0 0 0 1.5h.5ZM6 4.25a.75.75 0 0 1-.75.75h-.5a.75.75 0 0 1 0-1.5h.5a.75.75 0 0 1 .75.75ZM8.25 5a.75.75 0 0 0 0-1.5h-.5a.75.75 0 0 0 0 1.5h.5ZM12 4.25a.75.75 0 0 1-.75.75h-.5a.75.75 0 0 1 0-1.5h.5a.75.75 0 0 1 .75.75Zm2.25.75a.75.75 0 0 0 0-1.5h-.5a.75.75 0 0 0 0 1.5h.5Z"/></svg>
</body></html>
